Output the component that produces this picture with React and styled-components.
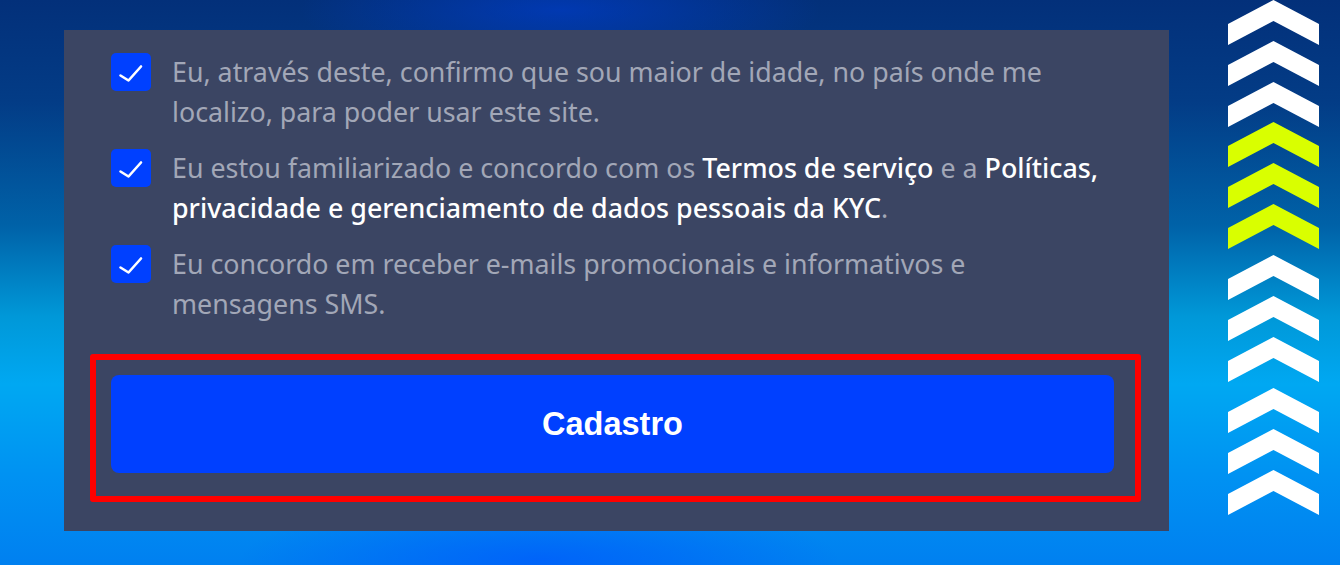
import styled, { createGlobalStyle } from 'styled-components';

const GlobalStyle = createGlobalStyle`
  html, body {
    margin: 0;
    padding: 0;
    height: 100%;
  }
  body {
    font-family: "Noto Sans", "Open Sans", sans-serif;
    background:
      radial-gradient(ellipse 260px 60px at 560px 10px, rgba(0, 60, 200, 0.7), rgba(0, 60, 200, 0)),
      radial-gradient(ellipse 300px 60px at 540px 560px, rgba(0, 80, 255, 0.6), rgba(0, 80, 255, 0)),
      linear-gradient(180deg, #03307a 0%, #033c86 18%, #0062a8 40%, #0098d8 56%, #00a8f2 68%, #0092f2 84%, #0080f0 100%);
    overflow: hidden;
  }
`;

const Page = styled.div`
  display: flex;
  align-items: flex-start;
  padding-left: 64px;
  height: 565px;
  box-sizing: border-box;
`;

const Panel = styled.section`
  width: 1105px;
  margin-top: 30px;
  height: 501px;
  box-sizing: border-box;
  background: #3b4563;
  padding: 22px 28px 0 26px;
`;

const List = styled.div`
  display: flex;
  flex-direction: column;
  gap: 17px;
  padding-left: 21px;
`;

const Row = styled.label`
  display: flex;
  align-items: flex-start;
  gap: 21px;
`;

const Box = styled.span`
  flex: 0 0 40px;
  width: 40px;
  height: 38px;
  margin-top: 1px;
  border-radius: 5px;
  background: #0040ff;
  display: flex;
  align-items: center;
  justify-content: center;
`;

const Text = styled.p`
  margin: 0;
  width: 932px;
  font-size: 26.8px;
  line-height: 39.5px;
  color: #a2a7b7;
`;

const Strong = styled.span`
  color: #ffffff;
  font-weight: 500;
`;

const Highlight = styled.div`
  margin-top: 31px;
  border: 6px solid #ff0000;
  border-radius: 3px;
  padding: 15px 21px 23px 15px;
`;

const Button = styled.button`
  display: block;
  width: 100%;
  height: 98px;
  border: none;
  border-radius: 8px;
  background: #0040ff;
  color: #ffffff;
  font-family: "Liberation Sans", Arial, sans-serif;
  font-weight: 700;
  font-size: 32.5px;
  cursor: pointer;
`;

const Chevrons = styled.svg`
  margin-left: 59px;
  flex: 0 0 91px;
`;

const Check = () => (
  <svg width="40" height="38" viewBox="0 0 40 38">
    <path d="M9.5 22.5 L17.5 27.5 L30 13.5" fill="none" stroke="#ffffff" strokeWidth="2.6" strokeLinecap="round" strokeLinejoin="round" />
  </svg>
);

const tips = [
  { y: 0, c: '#ffffff' },
  { y: 41, c: '#ffffff' },
  { y: 82, c: '#ffffff' },
  { y: 122, c: '#d9ff00' },
  { y: 163, c: '#d9ff00' },
  { y: 204, c: '#d9ff00' },
  { y: 255, c: '#ffffff' },
  { y: 296, c: '#ffffff' },
  { y: 337, c: '#ffffff' },
  { y: 388, c: '#ffffff' },
  { y: 429, c: '#ffffff' },
  { y: 470, c: '#ffffff' },
];

const items = [
  <>Eu, através deste, confirmo que sou maior de idade, no país onde me localizo, para poder usar este site.</>,
  <>Eu estou familiarizado e concordo com os <Strong>Termos de serviço</Strong> e a <Strong>Políticas, privacidade e gerenciamento de dados pessoais da KYC</Strong>.</>,
  <>Eu concordo em receber e-mails promocionais e informativos e mensagens SMS.</>,
];

export default function App() {
  return (
    <>
      <GlobalStyle />
      <Page>
        <Panel>
          <List>
            {items.map((content, i) => (
              <Row key={i}>
                <Box><Check /></Box>
                <Text>{content}</Text>
              </Row>
            ))}
          </List>
          <Highlight>
            <Button>Cadastro</Button>
          </Highlight>
        </Panel>
        <Chevrons width="91" height="520" viewBox="0 0 91 520">
          {tips.map((t, i) => (
            <polygon
              key={i}
              fill={t.c}
              points={`0,${t.y + 24} 45.5,${t.y} 91,${t.y + 24} 91,${t.y + 45} 45.5,${t.y + 21} 0,${t.y + 45}`}
            />
          ))}
        </Chevrons>
      </Page>
    </>
  );
}
